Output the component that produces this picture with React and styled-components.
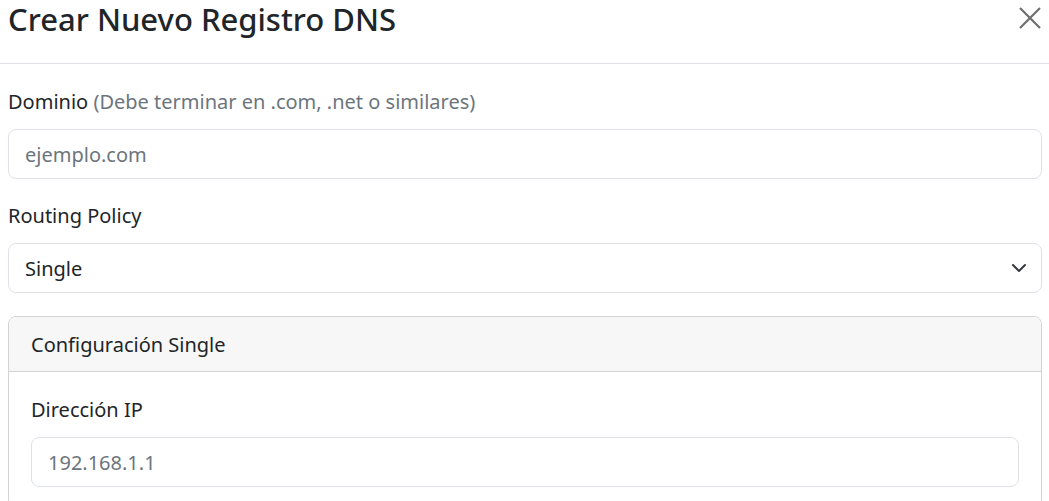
import React from "react";
import styled, { createGlobalStyle } from "styled-components";

const GlobalStyle = createGlobalStyle`
  html, body {
    margin: 0;
    padding: 0;
    background: #fff;
  }
  body {
    font-family: "Noto Sans", "Open Sans", sans-serif;
    color: #212529;
    overflow: hidden;
  }
  * { box-sizing: border-box; }
`;

const Modal = styled.div`
  width: 1049px;
  height: 501px;
  overflow: hidden;
`;

const Header = styled.div`
  display: flex;
  align-items: flex-start;
  justify-content: space-between;
  height: 64px;
  padding: 0 5px 0 8px;
  border-bottom: 1px solid #dee2e6;
`;

const Title = styled.h5`
  margin: 0;
  font-size: 31px;
  font-weight: 500;
  line-height: 38px;
  color: #212529;
`;

const Close = styled.button`
  width: 28px;
  height: 36px;
  padding: 0;
  border: 0;
  background: none;
  display: flex;
  align-items: center;
  justify-content: center;
  cursor: pointer;
`;

const Body = styled.div`
  padding: 24px 7px 0 8px;
`;

const Group = styled.div`
  margin-bottom: 23px;
`;

const Label = styled.label`
  display: block;
  font-size: 20px;
  line-height: 28px;
  margin-bottom: 13px;
`;

const Hint = styled.span`
  color: #6c757d;
`;

const Field = styled.div`
  display: flex;
  align-items: center;
  justify-content: space-between;
  height: 50px;
  padding: 0 14px 0 16px;
  border: 1px solid #dee2e6;
  border-radius: 8px;
  font-size: 20px;
  color: ${(p) => (p.$placeholder ? "#6c757d" : "#212529")};
`;

const Card = styled.div`
  border: 1px solid #d3d3d3;
  border-radius: 8px;
  overflow: hidden;
`;

const CardHeader = styled.div`
  height: 55px;
  display: flex;
  align-items: center;
  padding: 0 22px;
  background: #f7f7f7;
  border-bottom: 1px solid #d3d3d3;
  font-size: 20px;
`;

const CardBody = styled.div`
  padding: 24px 22px 20px 22px;
`;

function Chevron() {
  return (
    <svg width="16" height="16" viewBox="0 0 16 16" fill="none">
      <path d="M2 5l6 6 6-6" stroke="#343a40" strokeWidth="2" strokeLinecap="round" strokeLinejoin="round" />
    </svg>
  );
}

function CloseIcon() {
  return (
    <svg width="24" height="24" viewBox="0 0 24 24">
      <path d="M2 2L22 22M22 2L2 22" stroke="#6f6f6f" strokeWidth="2.2" />
    </svg>
  );
}

export default function App() {
  return (
    <Modal>
      <GlobalStyle />
      <Header>
        <Title>Crear Nuevo Registro DNS</Title>
        <Close aria-label="Cerrar">
          <CloseIcon />
        </Close>
      </Header>
      <Body>
        <Group>
          <Label>
            Dominio <Hint>(Debe terminar en .com, .net o similares)</Hint>
          </Label>
          <Field $placeholder>ejemplo.com</Field>
        </Group>
        <Group>
          <Label>Routing Policy</Label>
          <Field>
            Single
            <Chevron />
          </Field>
        </Group>
        <Card>
          <CardHeader>Configuración Single</CardHeader>
          <CardBody>
            <Label>Dirección IP</Label>
            <Field $placeholder>192.168.1.1</Field>
          </CardBody>
        </Card>
      </Body>
    </Modal>
  );
}
